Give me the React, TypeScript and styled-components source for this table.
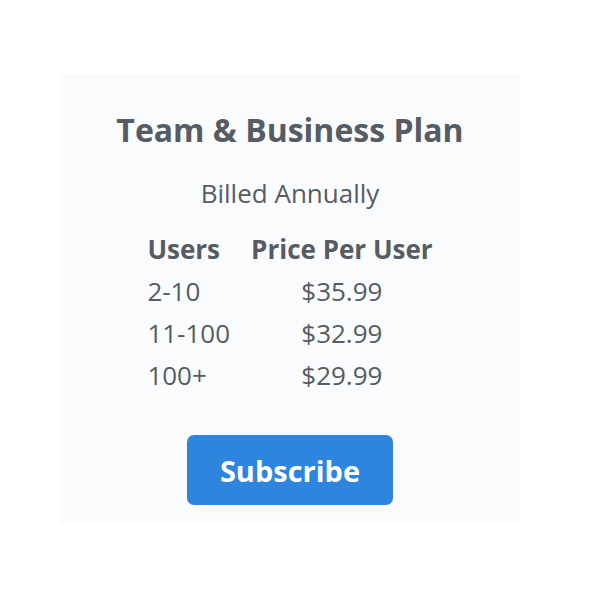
import React from 'react';
import styled, { createGlobalStyle } from 'styled-components';

const GlobalStyle = createGlobalStyle`
  body {
    margin: 0;
    background: #fff;
    font-family: 'Open Sans', 'Liberation Sans', sans-serif;
  }
`;

const Page = styled.div`
  width: 600px;
  height: 600px;
  padding: 74px 0 0 60px;
  box-sizing: border-box;
`;

const Card = styled.div`
  width: 460px;
  height: 450px;
  background: #fafbfd;
  display: flex;
  flex-direction: column;
  align-items: center;
  color: #575b63;
  padding-top: 34px;
  box-sizing: border-box;
`;

const Title = styled.h2`
  margin: 0;
  font-size: 32px;
  line-height: 44px;
  font-weight: 700;
`;

const Billing = styled.div`
  margin-top: 24px;
  font-size: 26px;
  line-height: 34px;
`;

const PriceTable = styled.table`
  margin-top: 18px;
  border-collapse: collapse;
  font-size: 26px;
`;

const Cell = styled.td<{ $center?: boolean }>`
  padding: 0;
  height: 42px;
  text-align: ${(p) => (p.$center ? 'center' : 'left')};
  &:first-child {
    padding-right: 21px;
  }
`;

const Head = styled(Cell).attrs({ as: 'th' })`
  font-weight: 700;
`;

const SubscribeButton = styled.button`
  margin-top: 39px;
  width: 206px;
  height: 70px;
  border: none;
  border-radius: 7px;
  background: #2d85de;
  color: #fff;
  font-family: inherit;
  font-size: 29px;
  font-weight: 700;
  cursor: pointer;
`;

const tiers = [
  { users: '2-10', price: '$35.99' },
  { users: '11-100', price: '$32.99' },
  { users: '100+', price: '$29.99' },
];

export default function App() {
  return (
    <Page>
      <GlobalStyle />
      <Card>
        <Title>Team &amp; Business Plan</Title>
        <Billing>Billed Annually</Billing>
        <PriceTable>
          <thead>
            <tr>
              <Head>Users</Head>
              <Head $center>Price Per User</Head>
            </tr>
          </thead>
          <tbody>
            {tiers.map((t) => (
              <tr key={t.users}>
                <Cell>{t.users}</Cell>
                <Cell $center>{t.price}</Cell>
              </tr>
            ))}
          </tbody>
        </PriceTable>
        <SubscribeButton>Subscribe</SubscribeButton>
      </Card>
    </Page>
  );
}
